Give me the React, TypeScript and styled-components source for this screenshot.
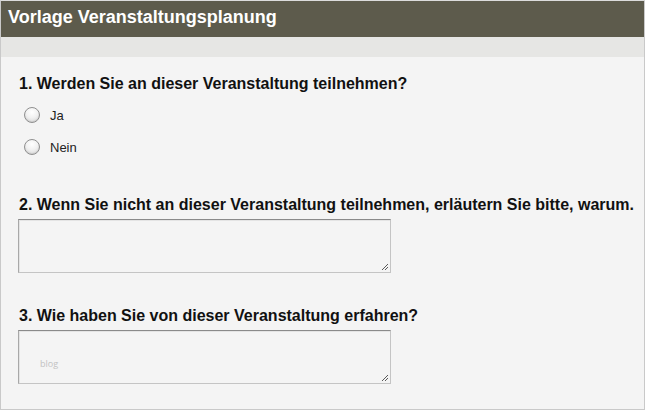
import React from 'react';
import styled, { createGlobalStyle } from 'styled-components';

const GlobalStyle = createGlobalStyle`
    html, body {
        margin: 0;
        padding: 0;
        background: #ffffff;
    }
    body {
        font-family: "Liberation Sans", Arial, sans-serif;
    }
`;

const Frame = styled.div`
    width: 645px;
    height: 410px;
    box-sizing: border-box;
    border: 1px solid #c9c9c9;
    border-top-color: #dcdcdc;
    background: #f4f4f4;
    overflow: hidden;
    display: flex;
    flex-direction: column;
`;

const Header = styled.div`
    height: 36px;
    background: #5d5b4c;
    color: #ffffff;
    font-weight: bold;
    font-size: 18px;
    line-height: 33px;
    padding-left: 7px;
    flex-shrink: 0;
`;

const Band = styled.div`
    height: 20px;
    background: #e6e6e4;
    flex-shrink: 0;
`;

const Body = styled.div`
    padding: 17px 0 0 17px;
    display: flex;
    flex-direction: column;
`;

const Question = styled.div<{ $gap: number }>`
    display: flex;
    flex-direction: column;
    margin-bottom: ${p => p.$gap}px;
`;

const Title = styled.div`
    font-size: 16px;
    font-weight: bold;
    color: #111111;
    line-height: 20px;
    margin-bottom: 4px;
    padding-left: 1px;
    white-space: nowrap;
`;

const Options = styled.div`
    display: flex;
    flex-direction: column;
    gap: 16px;
    padding-left: 6px;
    margin-top: 9px;
`;

const Option = styled.label`
    display: flex;
    align-items: center;
    gap: 10px;
    font-size: 13px;
    color: #222222;
    height: 16px;
`;

const Radio = styled.span`
    width: 16px;
    height: 16px;
    box-sizing: border-box;
    border-radius: 50%;
    border: 1px solid #8f8f8f;
    background: radial-gradient(circle at 50% 30%, #ffffff 0%, #f2f2f2 45%, #d2d2d2 100%);
    box-shadow: inset 0 -1px 1px rgba(0, 0, 0, 0.08);
`;

const TextArea = styled.div`
    position: relative;
    width: 373px;
    height: 54px;
    box-sizing: border-box;
    border: 1px solid #c4c4c4;
    border-top-color: #8a8a8a;
    border-left-color: #a8a8a8;
    background: #f4f4f4;
    box-shadow: inset 1px 1px 0 #e4e4e4;
`;

const Placeholder = styled.span`
    position: absolute;
    left: 21px;
    top: 26px;
    font-family: "Open Sans", "DejaVu Sans", sans-serif;
    font-size: 9px;
    color: #c2c2c2;
`;

const Grip = styled.svg`
    position: absolute;
    right: 1px;
    bottom: 1px;
`;

const ResizeGrip = () => (
    <Grip width="8" height="8" viewBox="0 0 8 8">
        <path d="M7 1 L1 7 M7 4 L4 7" stroke="#5a5a5a" strokeWidth="1" />
    </Grip>
);

const App = () => {
    return (
        <>
            <GlobalStyle />
            <Frame>
                <Header>Vorlage Veranstaltungsplanung</Header>
                <Band />
                <Body>
                    <Question $gap={40}>
                        <Title>1. Werden Sie an dieser Veranstaltung teilnehmen?</Title>
                        <Options>
                            <Option><Radio />Ja</Option>
                            <Option><Radio />Nein</Option>
                        </Options>
                    </Question>
                    <Question $gap={33}>
                        <Title>2. Wenn Sie nicht an dieser Veranstaltung teilnehmen, erläutern Sie bitte, warum.</Title>
                        <TextArea><ResizeGrip /></TextArea>
                    </Question>
                    <Question $gap={0}>
                        <Title>3. Wie haben Sie von dieser Veranstaltung erfahren?</Title>
                        <TextArea>
                            <Placeholder>blog</Placeholder>
                            <ResizeGrip />
                        </TextArea>
                    </Question>
                </Body>
            </Frame>
        </>
    );
};

export default App;
